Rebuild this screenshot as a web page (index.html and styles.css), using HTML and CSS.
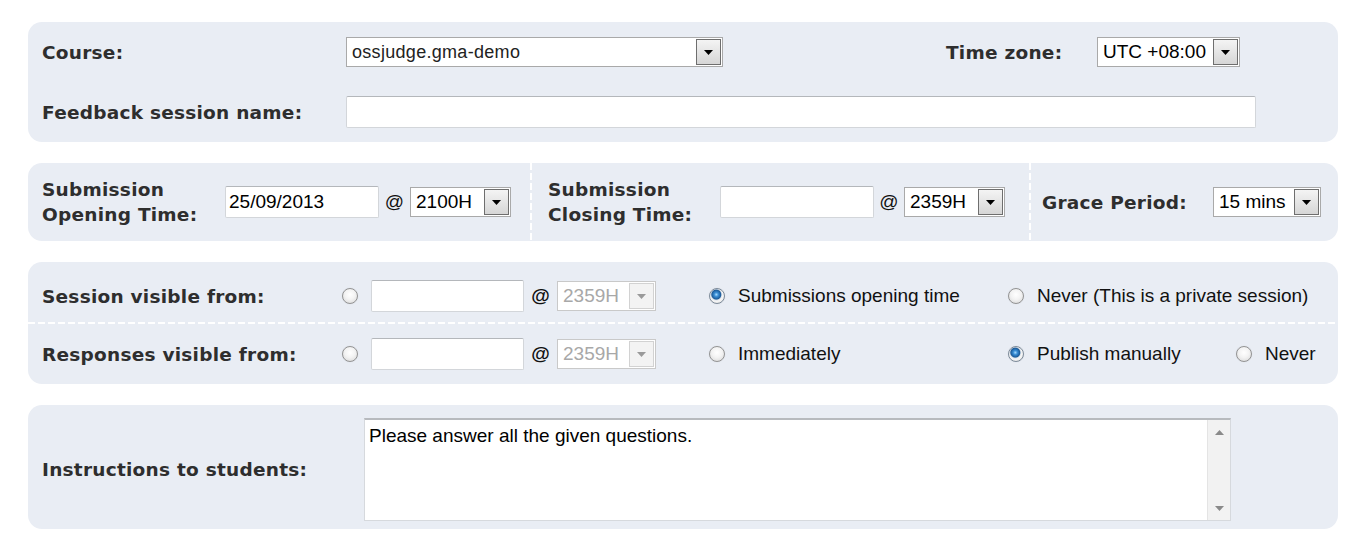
FILE: index.html
```html
<!DOCTYPE html>
<html>
<head>
<meta charset="utf-8">
<link rel="stylesheet" href="styles.css">
</head>
<body>
<div class="page">

  <div class="panel p1">
    <div class="row r1">
      <span class="lbl w-course">Course:</span>
      <div class="select sel-course"><span class="val">ossjudge.gma-demo</span><span class="btn"><svg width="9" height="5" viewBox="0 0 9 5"><path d="M0 0h9L4.5 5z" fill="#000"/></svg></span></div>
      <span class="lbl tz-lbl">Time zone:</span>
      <div class="select sel-tz"><span class="val">UTC +08:00</span><span class="btn"><svg width="9" height="5" viewBox="0 0 9 5"><path d="M0 0h9L4.5 5z" fill="#000"/></svg></span></div>
    </div>
    <div class="row r2">
      <span class="lbl w-course">Feedback session name:</span>
      <div class="input in-name"></div>
    </div>
  </div>

  <div class="panel p2">
    <div class="col c1">
      <span class="lbl l-open">Submission<br>Opening Time:</span>
      <div class="input in-date"><span class="val">25/09/2013</span></div>
      <span class="at at-1">@</span>
      <div class="select sel-time"><span class="val">2100H</span><span class="btn"><svg width="9" height="5" viewBox="0 0 9 5"><path d="M0 0h9L4.5 5z" fill="#000"/></svg></span></div>
    </div>
    <div class="col c2 dashed-v">
      <span class="lbl l-close">Submission<br>Closing Time:</span>
      <div class="input in-date"></div>
      <span class="at at-2">@</span>
      <div class="select sel-time"><span class="val">2359H</span><span class="btn"><svg width="9" height="5" viewBox="0 0 9 5"><path d="M0 0h9L4.5 5z" fill="#000"/></svg></span></div>
    </div>
    <div class="col c3 dashed-v">
      <span class="lbl l-grace">Grace Period:</span>
      <div class="select sel-grace"><span class="val">15 mins</span><span class="btn"><svg width="9" height="5" viewBox="0 0 9 5"><path d="M0 0h9L4.5 5z" fill="#000"/></svg></span></div>
    </div>
  </div>

  <div class="panel p3">
    <div class="vrow vr1">
      <span class="lbl">Session visible from:</span>
      <div class="datecell">
        <span class="radio"></span>
        <div class="input in-vdate"></div>
        <span class="at at-3">@</span>
        <div class="select disabled sel-vtime"><span class="val">2359H</span><span class="btn"><svg width="9" height="5" viewBox="0 0 9 5"><path d="M0 0h9L4.5 5z" fill="#9a9a9a"/></svg></span></div>
      </div>
      <div class="opt"><span class="radio on"></span><span class="otext">Submissions opening time</span></div>
      <div class="opt span2"><span class="radio"></span><span class="otext">Never (This is a private session)</span></div>
    </div>
    <div class="dashed-h"></div>
    <div class="vrow vr2">
      <span class="lbl">Responses visible from:</span>
      <div class="datecell">
        <span class="radio"></span>
        <div class="input in-vdate"></div>
        <span class="at at-3">@</span>
        <div class="select disabled sel-vtime"><span class="val">2359H</span><span class="btn"><svg width="9" height="5" viewBox="0 0 9 5"><path d="M0 0h9L4.5 5z" fill="#9a9a9a"/></svg></span></div>
      </div>
      <div class="opt"><span class="radio"></span><span class="otext">Immediately</span></div>
      <div class="opt"><span class="radio on"></span><span class="otext">Publish manually</span></div>
      <div class="opt"><span class="radio"></span><span class="otext">Never</span></div>
    </div>
  </div>

  <div class="panel p4">
    <span class="lbl l-instr">Instructions to students:</span>
    <div class="textarea">
      <div class="ta-text">Please answer all the given questions.</div>
      <div class="scrollbar">
        <svg width="9" height="5" viewBox="0 0 9 5"><path d="M0 5h9L4.5 0z" fill="#8a8a8a"/></svg>
        <svg width="9" height="5" viewBox="0 0 9 5"><path d="M0 0h9L4.5 5z" fill="#8a8a8a"/></svg>
      </div>
    </div>
  </div>

</div>
</body>
</html>
```

FILE: styles.css
```css
* { box-sizing: border-box; }

body {
  margin: 0;
  background: #ffffff;
  font-family: "Liberation Sans", Arial, sans-serif;
  color: #000;
}

.page {
  padding: 22px 0 0 28px;
  display: flex;
  flex-direction: column;
  gap: 21px;
}

.panel {
  width: 1310px;
  background: #e9edf4;
  border-radius: 14px;
}

.lbl {
  font-family: "DejaVu Sans", Verdana, sans-serif;
  font-weight: bold;
  font-size: 18.5px;
  letter-spacing: 0.25px;
  color: #2e2e2e;
  white-space: nowrap;
}

/* ---------- generic controls ---------- */
.select {
  display: flex;
  height: 30px;
  background: #ffffff;
  border: 1px solid #a9a9a9;
}
.select .val {
  flex: 1;
  padding-left: 5px;
  font-size: 19px;
  line-height: 28px;
  color: #000;
  white-space: nowrap;
  overflow: hidden;
}
.select .btn {
  width: 25px;
  margin: 1px;
  border: 1px solid #6e6e6e;
  background: linear-gradient(#f4f4f4, #d6d6d6);
  display: flex;
  align-items: center;
  justify-content: center;
}
.select.disabled {
  border-color: #c9c9c9;
}
.select.disabled .val {
  color: #a8a8a8;
}
.select.disabled .btn {
  border-color: #d2d2d2;
  background: #f3f3f3;
}

.input {
  height: 32px;
  background: #ffffff;
  border: 1px solid #d3d6da;
  border-top-color: #b4b7bb;
  border-radius: 2px;
  display: flex;
  align-items: center;
}
.input .val {
  padding-left: 3px;
  font-size: 19px;
}

.at {
  font-size: 19px;
  text-align: center;
  color: #111;
}

.radio {
  flex: none;
  width: 16px;
  height: 16px;
  border-radius: 50%;
  border: 1px solid #939393;
  background: radial-gradient(circle at 50% 40%, #ffffff 0, #f3f3f3 45%, #d5d5d5 100%);
  box-shadow: 0 0 1px rgba(0,0,0,0.15);
}
.radio.on {
  border-color: #7c8a99;
  background: radial-gradient(circle at 45% 40%, #a9dcff 0, #3b8fd6 2px, #1c5b99 4.5px, #dde3ea 5.5px, #f6f6f6 6.5px, #d8d8d8 100%);
}

/* ---------- panel 1 ---------- */
.p1 {
  padding: 15px 0 14px 14px;
}
.row {
  display: flex;
  align-items: center;
}
.r1 { height: 30px; }
.r2 { height: 32px; margin-top: 29px; }
.w-course { width: 304px; }
.sel-course { width: 377px; }
.sel-course .val { font-size: 18px; letter-spacing: 0.3px; color: #222; }
.tz-lbl { margin-left: 223px; width: 151px; }
.sel-tz { width: 143px; }
.in-name { width: 910px; }

/* ---------- panel 2 ---------- */
.p2 {
  height: 78px;
  display: flex;
}
.col {
  display: flex;
  align-items: center;
  height: 100%;
}
.c1 { width: 502px; padding-left: 14px; }
.c2 { width: 499px; padding-left: 18px; }
.c3 { width: 309px; padding-left: 13px; }
.dashed-v {
  background: repeating-linear-gradient(to bottom, #ffffff 0 7px, transparent 7px 10px) left top / 2px 100% no-repeat;
}
.l-open { width: 183px; line-height: 25px; }
.l-close { width: 172px; line-height: 25px; }
.l-grace { width: 171px; }
.in-date { width: 154px; height: 32px; }
.at-1 { width: 31px; }
.at-2 { width: 30px; }
.sel-time { width: 101px; }
.sel-grace { width: 108px; }

/* ---------- panel 3 ---------- */
.vrow {
  display: grid;
  grid-template-columns: 300px 367px 299px 228px 1fr;
  align-items: center;
  padding-left: 14px;
}
.vr1 { padding-top: 18px; padding-bottom: 10px; }
.vr2 { padding-top: 14px; padding-bottom: 14px; }
.dashed-h {
  height: 2px;
  background: repeating-linear-gradient(to right, #ffffff 0 7px, transparent 7px 10px);
}
.datecell {
  display: flex;
  align-items: center;
}
.in-vdate { width: 153px; margin-left: 13px; }
.at-3 { width: 33px; font-weight: bold; }
.sel-vtime { width: 99px; }
.opt {
  display: flex;
  align-items: center;
  gap: 13px;
  height: 32px;
}
.span2 { grid-column: span 2; }
.otext {
  font-size: 19px;
  color: #111;
  white-space: nowrap;
}

/* ---------- panel 4 ---------- */
.p4 {
  display: flex;
  align-items: center;
  padding: 13px 0 8px 14px;
}
.l-instr { width: 322px; }
.textarea {
  width: 867px;
  height: 103px;
  background: #ffffff;
  border: 1px solid #d6d9dd;
  border-top: 2px solid #b7babe;
  display: flex;
}
.ta-text {
  flex: 1;
  padding: 5px 4px;
  font-size: 19px;
  line-height: 22px;
}
.scrollbar {
  width: 23px;
  background: #f2f2f2;
  border-left: 1px solid #e4e4e4;
  display: flex;
  flex-direction: column;
  justify-content: space-between;
  align-items: center;
  padding: 10px 0 9px;
}
```
